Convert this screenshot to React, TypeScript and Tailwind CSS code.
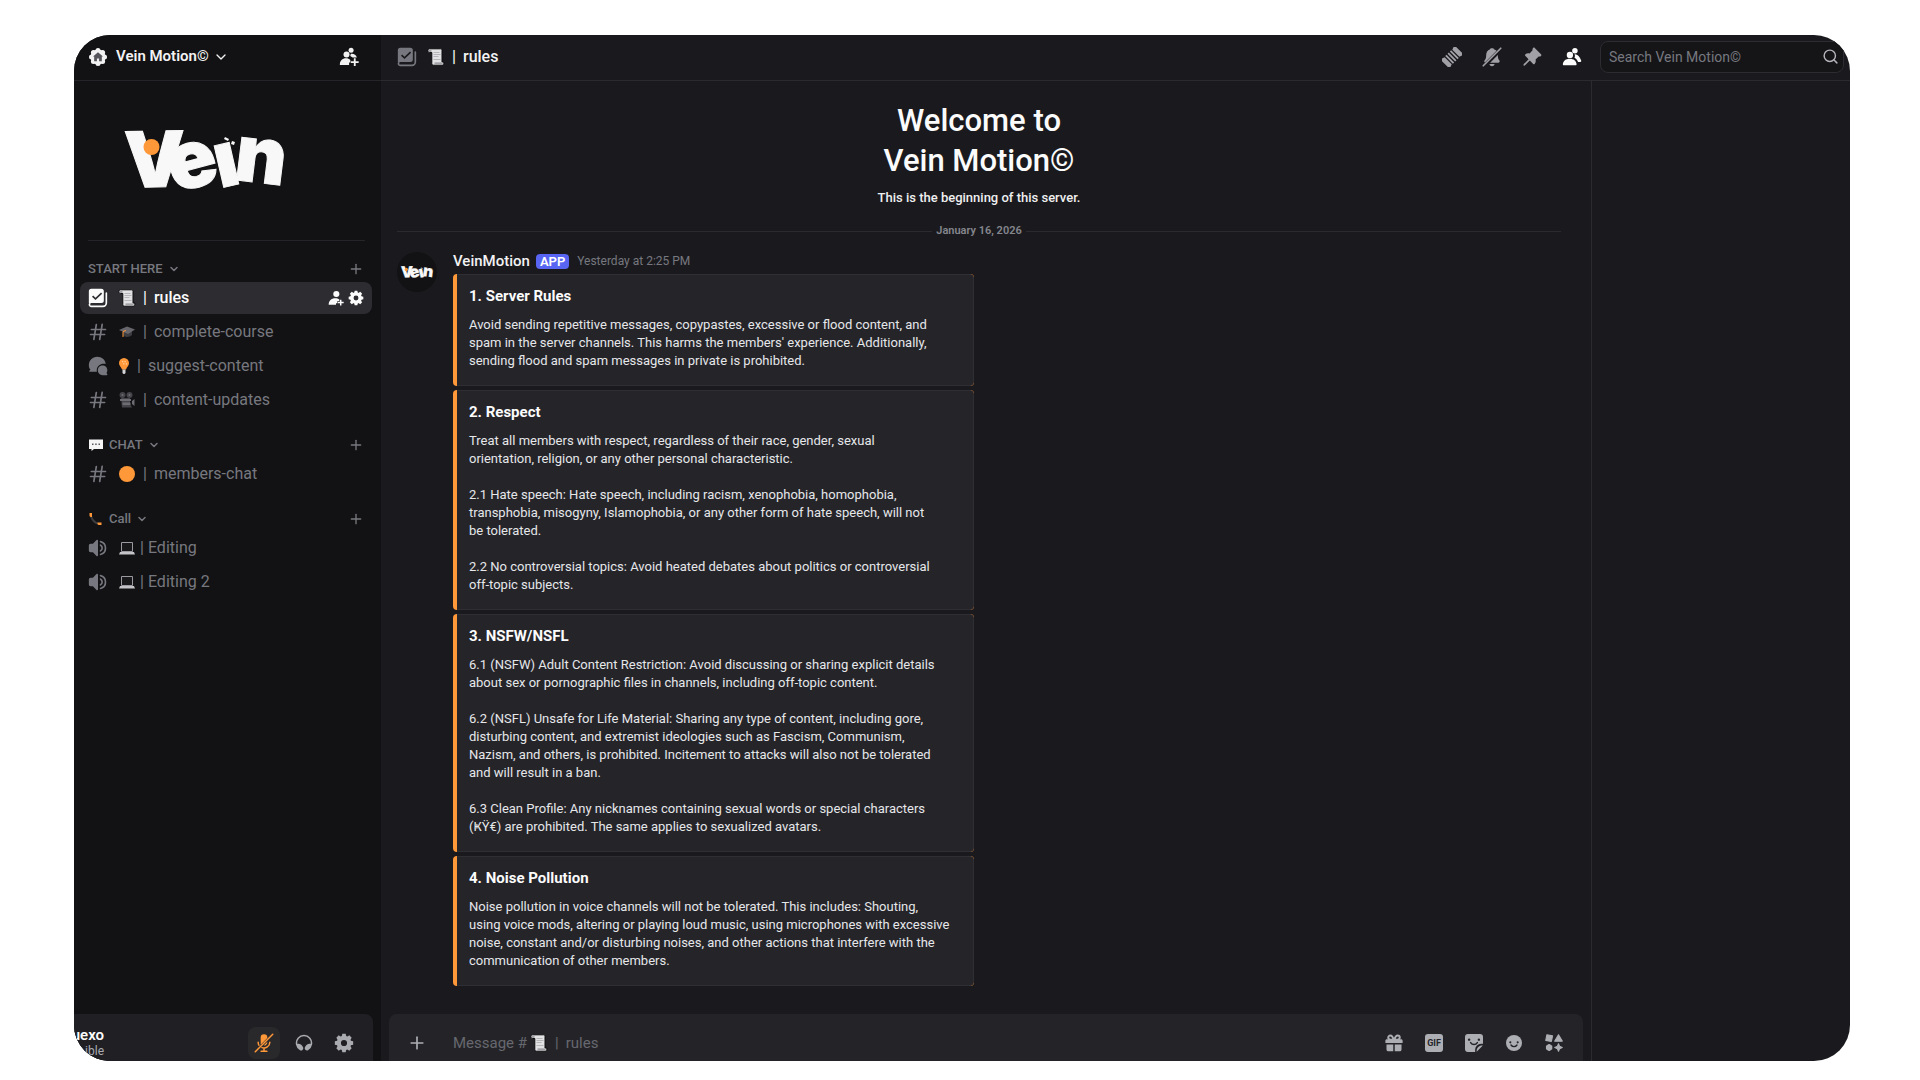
import React, { useState } from 'react';
import { ChevronDown, Plus, Search } from 'lucide-react';

interface IconProps {
  className?: string;
}

/* ---------- logo ---------- */

const VeinLogo: React.FC<IconProps> = ({ className }) => (
  <svg viewBox="0 0 170 80" className={`overflow-visible ${className}`} role="img" aria-label="Vein" fontFamily="Inter, sans-serif" fontWeight={900} fill="#f8f8f8">
    <g stroke="#f8f8f8" strokeWidth="1">
      <text x="4" y="67" fontSize="77" transform="rotate(-1 32 40)">V</text>
      <text x="48" y="67" fontSize="81" transform="rotate(-15 74 45)">e</text>
      <text x="95" y="66" fontSize="78" transform="rotate(-13 107 45)">ı</text>
      <text x="115" y="63" fontSize="79" transform="rotate(7 142 42)">n</text>
    </g>
    <circle cx="31.5" cy="27" r="8" fill="#ff9838" />
    <path d="M105 17l4 2-1 2-4-2zM112 21l3 1-1 3-3-1z" />
  </svg>
);

/* ---------- interface icons ---------- */

const ServerBadge: React.FC<IconProps> = ({ className }) => (
  <svg viewBox="0 0 24 24" className={className}>
    <g fill="#f2f2f3">
      <circle cx="12" cy="12" r="9" />
      <circle cx="12" cy="4.2" r="3" />
      <circle cx="12" cy="19.8" r="3" />
      <circle cx="4.2" cy="12" r="3" />
      <circle cx="19.8" cy="12" r="3" />
      <circle cx="6.5" cy="6.5" r="3" />
      <circle cx="17.5" cy="6.5" r="3" />
      <circle cx="6.5" cy="17.5" r="3" />
      <circle cx="17.5" cy="17.5" r="3" />
    </g>
    <path fill="#55555b" d="M12 6.2l6 5.3h-1.4v5.6h-3.3v-3.4h-2.6v3.4H7.4v-5.6H6z" />
  </svg>
);

const InvitePeople: React.FC<IconProps> = ({ className }) => (
  <svg viewBox="0 0 24 24" className={className} fill="currentColor">
    <circle cx="14.5" cy="4" r="3" />
    <circle cx="9" cy="9" r="3.6" />
    <path d="M14 8.3c3.6-.6 6.4 1 7.4 4.2h-5.2l-2.6-1.6z" />
    <path d="M1 21.5c0-5 3-8 7.4-8 2.2 0 4 .7 5.2 2v3h-1.5v3z" />
    <path d="M17.8 13.5h2.2v3.6h3.6v2.2H20v3.6h-2.2v-3.6h-3.6v-2.2h3.6z" />
  </svg>
);

const AddMember: React.FC<IconProps> = ({ className }) => (
  <svg viewBox="0 0 24 24" className={className} fill="currentColor">
    <circle cx="12.5" cy="6" r="4.6" />
    <path d="M1 22c0-6 4-9.8 9.8-9.8 2.6 0 4.6.6 6.2 2v2.3h-3V20h-2v2z" />
    <path d="M18 14.5h2.2v3.2h3.3v2.2h-3.3v3.3H18v-3.3h-3.3v-2.2H18z" />
  </svg>
);

const Gear: React.FC<IconProps> = ({ className }) => (
  <svg viewBox="0 0 24 24" className={className}>
    <circle cx="12" cy="12" r="6.2" fill="none" stroke="currentColor" strokeWidth="5" />
    <g fill="currentColor">
      {[0, 45, 90, 135, 180, 225, 270, 315].map(angle => (
        <path key={angle} d="M10 1h4l1 4.5H9z" transform={`rotate(${angle} 12 12)`} />
      ))}
    </g>
  </svg>
);

const RulesIcon: React.FC<IconProps> = ({ className }) => (
  <svg viewBox="0 0 24 24" className={className}>
    <path
      fill="currentColor"
      fillRule="evenodd"
      d="M4 1h12a3 3 0 0 1 3 3v11a3 3 0 0 1-3 3H4a3 3 0 0 0-2 .7L1 18V4a3 3 0 0 1 3-3zm11.6 4.3L9 11.6 6.2 8.9 4.8 10.4 9 14.5 17 6.8z"
    />
    <path fill="none" stroke="currentColor" strokeWidth="2" strokeLinecap="round" d="M22 6v12a4 4 0 0 1-4 4H4a2 2 0 0 1-2-3" />
  </svg>
);

const Hash: React.FC<IconProps> = ({ className }) => (
  <svg viewBox="0 0 24 24" className={className} fill="currentColor">
    <path
      fillRule="evenodd"
      d="M10.99 3.16A1 1 0 1 0 9 2.84L8.15 8H4a1 1 0 0 0 0 2h3.82l-.67 4H3a1 1 0 1 0 0 2h3.82l-.8 4.84a1 1 0 0 0 1.97.32L8.85 16h4.97l-.8 4.84a1 1 0 0 0 1.97.32l.86-5.16H20a1 1 0 1 0 0-2h-3.82l.67-4H21a1 1 0 1 0 0-2h-3.82l.8-4.84a1 1 0 1 0-1.97-.32L15.15 8h-4.97l.8-4.84ZM14.15 14l.67-4H9.85l-.67 4h4.97Z"
    />
  </svg>
);

const Forum: React.FC<IconProps> = ({ className }) => (
  <svg viewBox="0 0 24 24" className={className} fill="currentColor">
    <path d="M11 1c5.500 0 9.800 3.600 10.200 8.500-5-1.400-10.700 2-10.700 7.500 0 .8.1 1.400.3 2H2.500c-1 0-1.300-1-.6-1.600l1-1C1.700 15 1 13 1 11 1 5.400 5.400 1 11 1z" />
    <path d="M17.5 11.5c3.300 0 5.700 2.500 5.700 5.700 0 1.300-.4 2.400-1 3.300l.9 1.200c.4.600.1 1.300-.6 1.300h-5c-3.200 0-5.700-2.500-5.700-5.800s2.500-5.700 5.700-5.700z" />
  </svg>
);

const Speaker: React.FC<IconProps> = ({ className }) => (
  <svg viewBox="0 0 24 24" className={className} fill="currentColor">
    <path d="M12 3a1 1 0 0 0-1-1h-.06a1 1 0 0 0-.74.32L5.92 7H3a2 2 0 0 0-2 2v6a2 2 0 0 0 2 2h2.92l4.28 4.68a1 1 0 0 0 .74.32H11a1 1 0 0 0 1-1V3Z" />
    <path d="M15.1 20.75c-.58.14-1.1-.33-1.1-.92v-.03c0-.5.37-.92.85-1.05a7 7 0 0 0 0-13.5A1.11 1.11 0 0 1 14 4.200v-.03c0-.6.52-1.06 1.1-.92a9 9 0 0 1 0 17.5Z" />
    <path d="M15.16 16.51c-.57.28-1.16-.2-1.16-.83v-.14c0-.43.28-.8.63-1.02a3 3 0 0 0 0-5.04c-.35-.23-.63-.6-.63-1.02v-.14c0-.63.59-1.1 1.16-.83a5 5 0 0 1 0 9.02Z" />
  </svg>
);

const Threads: React.FC<IconProps> = ({ className }) => (
  <svg viewBox="0 0 24 24" className={className} fill="currentColor">
    <g transform="rotate(45 12 12)">
      <path d="M4 0h16l-2 5.500H6zM6 18.500h12l2 5.500H4z" />
      <path d="M5.500 7h13v2.200h-13zM5.500 10.900h13v2.200h-13zM5.500 14.800h13V17h-13z" />
    </g>
  </svg>
);

const BellOff: React.FC<IconProps> = ({ className }) => (
  <svg viewBox="0 0 24 24" className={className} fill="currentColor">
    <path d="M12 1.500c1.500 0 2.300.6 2.700 1.500 1.100.3 2 .8 2.800 1.500L3.500 18.500c-1-.4-1-1.700-.3-2.500 1.300-1.400 1.800-3 1.800-6 0-3.600 1.700-6.200 4.300-7C9.700 2.100 10.500 1.500 12 1.500z" />
    <path d="M19 9.500c0 3.200.5 5 1.800 6.500.9 1 .3 3-1.300 3H9.800zM9 20.500h6c0 1.500-1.300 2.700-3 2.700s-3-1.200-3-2.700z" />
    <path stroke="currentColor" strokeWidth="2" strokeLinecap="round" d="M1.500 22.500l21-21" />
  </svg>
);

const Pin: React.FC<IconProps> = ({ className }) => (
  <svg viewBox="0 0 24 24" className={className} fill="currentColor">
    <path d="M13.300 1.200c.8-.8 1.500-.5 2 0l7.500 7.500c.6.600.7 1.300 0 2-.8.8-1.800 1-2.800.7l-3.700 3.700c.5 1.900.2 3.800-1.200 5.200-.6.600-1.200.5-1.700 0l-4-4-5.700 5.700c-.6.600-1.300.6-1.700.2-.4-.4-.4-1.100.2-1.700L7.900 14.600l-4-4c-.5-.5-.6-1.100 0-1.700 1.400-1.400 3.300-1.700 5.200-1.200L12.700 4c-.3-1-.1-2 .6-2.800z" />
  </svg>
);

const Members: React.FC<IconProps> = ({ className }) => (
  <svg viewBox="0 0 24 24" className={className} fill="currentColor">
    <circle cx="15.5" cy="4.500" r="3.300" />
    <path d="M15 8.800c3.300-.6 6.300 2.500 8 7.500.3 1-.1 1.700-1.100 1.700h-2.600c-.8-2.400-2.300-4.200-4.300-5.200.7-1.200.7-2.700 0-4z" />
    <circle cx="9.5" cy="9.500" r="3.800" />
    <path d="M1 20.500C1.500 16.500 4.500 14 9.300 14s7.800 2.500 8.200 6.500c.1 1-.4 1.500-1.200 1.500H2.200c-.8 0-1.300-.5-1.200-1.500z" />
  </svg>
);

const MicMuted: React.FC<IconProps> = ({ className }) => (
  <svg viewBox="0 0 24 24" className={className} fill="none" stroke="currentColor" strokeWidth="1.800" strokeLinecap="round">
    <path fill="currentColor" stroke="none" d="M12 1.500a4 4 0 0 1 4 4v.5l-8 8V5.500a4 4 0 0 1 4-4zM16 10.500v.5a4 4 0 0 1-4.500 4z" />
    <path d="M5 11c0 1.500.3 2.600.9 3.700M19 11a7 7 0 0 1-9.500 6.500M12 18.500v3M8.500 22h7" />
    <path d="M1.500 22.500l21-21" />
  </svg>
);

const Headphones: React.FC<IconProps> = ({ className }) => (
  <svg viewBox="0 0 24 24" className={className} fill="currentColor">
    <path d="M12 3a9 9 0 0 0-8.95 10h1.87a5 5 0 0 1 4.1 2.13l1.37 1.97a3.1 3.1 0 0 1-.17 3.78 2.85 2.85 0 0 1-3.55.74 11 11 0 1 1 10.66 0c-1.27.71-2.73.23-3.55-.74a3.1 3.1 0 0 1-.17-3.78l1.38-1.97a5 5 0 0 1 4.1-2.13h1.86A9 9 0 0 0 12 3Z" />
  </svg>
);

const Gift: React.FC<IconProps> = ({ className }) => (
  <svg viewBox="0 0 24 24" className={className} fill="currentColor">
    <path fill="none" stroke="currentColor" strokeWidth="2.600" d="M11.5 7.500C10.5 4 9 2 7.200 2 5.500 2 4.300 3.200 4.300 4.700S5.500 7.500 7.200 7.500zM12.5 7.500C13.500 4 15 2 16.800 2c1.700 0 2.900 1.200 2.900 2.700s-1.200 2.800-2.900 2.800z" />
    <path d="M2.500 7h19c1.200 0 2 .8 2 2v3H.5V9c0-1.200.8-2 2-2zM2 14h9v9H4.500A2.500 2.500 0 0 1 2 20.500zM13 14h9v6.500a2.500 2.500 0 0 1-2.500 2.500H13z" />
  </svg>
);

const Gif: React.FC<IconProps> = ({ className }) => (
  <svg viewBox="0 0 24 24" className={className}>
    <rect width="24" height="24" rx="4" fill="currentColor" />
    <text x="12" y="16.5" textAnchor="middle" fontSize="12" fontWeight={700} fontFamily="Roboto, sans-serif" fill="#242429">GIF</text>
  </svg>
);

const Sticker: React.FC<IconProps> = ({ className }) => (
  <svg viewBox="0 0 24 24" className={className}>
    <path fill="currentColor" d="M4 0h16a4 4 0 0 1 4 4v9h-2.500a8 8 0 0 0-8 8v3H4a4 4 0 0 1-4-4V4a4 4 0 0 1 4-4z" />
    <path fill="currentColor" d="M23.5 15.500l-8 8c-.2-5 3-8.200 8-8z" />
    <g fill="#242429">
      <circle cx="5.5" cy="7.500" r="1.600" />
      <circle cx="18.5" cy="7.500" r="1.600" />
    </g>
    <path fill="none" stroke="#242429" strokeWidth="2" strokeLinecap="round" d="M7.500 11.500c2.300 3.500 6.700 3.500 9 0" />
  </svg>
);

const Smile: React.FC<IconProps> = ({ className }) => (
  <svg viewBox="0 0 24 24" className={className}>
    <circle cx="12" cy="12" r="12" fill="currentColor" />
    <g fill="#242429">
      <circle cx="6.5" cy="11" r="1.600" />
      <circle cx="17.5" cy="11" r="1.600" />
    </g>
    <path fill="none" stroke="#242429" strokeWidth="2" strokeLinecap="round" d="M7.500 15c2.300 3.300 6.700 3.300 9 0" />
  </svg>
);

const Apps: React.FC<IconProps> = ({ className }) => (
  <svg viewBox="0 0 24 24" className={className} fill="currentColor" stroke="currentColor" strokeWidth="1.500" strokeLinejoin="round">
    <path d="M2.500 1l7.500 1.500-1.500 7.500L1 8.500z" />
    <path d="M18 1l5 8.500H13z" />
    <path d="M5.500 14.500l3 1.800v3.400l-3 1.800-3-1.800v-3.400z" strokeWidth="2.500" />
    <path d="M18 13l1.500 3.500L23 18l-3.500 1.500L18 23l-1.500-3.500L13 18l3.500-1.500z" />
  </svg>
);

/* ---------- channel emojis ---------- */

const ScrollEmoji: React.FC<IconProps> = ({ className }) => (
  <svg viewBox="0 0 18 18" className={className}>
    <path fill="#e2e2e4" stroke="#0c0c0e" strokeWidth="1" d="M2.500.8h11c1 0 1.500.7 1.500 1.500V14h1.800v1.500c0 1-.7 1.700-1.700 1.700H6.500c-1 0-1.700-.7-1.700-1.700V4.500H2.500C1.500 4.500.9 3.700.9 2.700S1.500.8 2.500.8z" />
    <path stroke="#b4b4b9" strokeWidth="1" d="M6.500 4.500h6M6.500 6.500h7M6.500 8.500h5M6.500 11.500h7" />
    <path fill="#8c8c92" d="M2 2.200h2.500v1.500H2zM7.500 14.500h8v1.200h-8z" />
  </svg>
);

const GradCapEmoji: React.FC<IconProps> = ({ className }) => (
  <svg viewBox="0 0 18 18" className={className}>
    <path fill="#3c3c41" d="M5 8v4.500c2 2 6.500 2 9-.5V8z" />
    <path fill="#66666c" d="M1 7l8-3.500L17 6.500l-7 4.500z" />
    <path fill="none" stroke="#ff9838" d="M8 7.500L5 8.500V14" />
  </svg>
);

const BulbEmoji: React.FC<IconProps> = ({ className }) => (
  <svg viewBox="0 0 12 18" className={className}>
    <path fill="#ff9838" d="M6 1a5 5 0 0 1 5 5.200c0 2.800-2.500 4-3 6.300H4C3.500 10.200 1 9 1 6.200A5 5 0 0 1 6 1z" />
    <path fill="#ffd2a3" d="M4 4h1.200v1.200H4zM6.500 4h1.200v1.200H6.500zM5.200 6.200h1.200v1.200H5.200zM7.800 6.200H9v1.200H7.800z" />
    <path fill="#d5d5d8" d="M4.500 12.500h3V16l-1 1h-1l-1-1z" />
  </svg>
);

const CameraEmoji: React.FC<IconProps> = ({ className }) => (
  <svg viewBox="0 0 18 18" className={className}>
    <g fill="#44444a">
      <circle cx="4.5" cy="4" r="3" />
      <circle cx="11.5" cy="4" r="3" />
      <path d="M3 7h9v9.500H4zM12 13l2 3.500h-3z" />
    </g>
    <g fill="#6c6c72">
      <circle cx="4.5" cy="4" r="1" />
      <circle cx="11.5" cy="4" r="1" />
      <path d="M2 8h11v2H2zM4.500 11.500h8V14h-8zM14 10l2.500-2v7L14 13z" />
    </g>
  </svg>
);

const OrangeDotEmoji: React.FC<IconProps> = ({ className }) => (
  <svg viewBox="0 0 18 18" className={className}>
    <circle cx="9" cy="9" r="8" fill="#ff9838" />
  </svg>
);

const LaptopEmoji: React.FC<IconProps> = ({ className }) => (
  <svg viewBox="0 0 18 18" className={className}>
    <path fill="#18181b" stroke="#9a9aa0" strokeWidth="1" d="M3.500 3.500h11v9h-11z" />
    <path fill="#c4c4c8" d="M2 13h14l1 2.500H1z" />
  </svg>
);

const BubbleEmoji: React.FC<IconProps> = ({ className }) => (
  <svg viewBox="0 0 16 16" className={className}>
    <path fill="#f4f4f5" d="M1 2.500h14v9.500H6L3.500 14v-2H1z" />
    <path fill="#55555b" d="M4 6.500h1.500V8H4zM7.200 6.500h1.500V8H7.200zM10.500 6.500H12V8h-1.500z" />
  </svg>
);

const PhoneEmoji: React.FC<IconProps> = ({ className }) => (
  <svg viewBox="0 0 16 16" className={className}>
    <path fill="none" stroke="#3c3c41" strokeWidth="2" d="M3 5c1 4 4 7 8 8" />
    <path fill="#ff9838" d="M1.500 2h2.500v4H2.500l-1-1zM9.500 11.500h4V14h-3l-1-1z" />
  </svg>
);

/* ---------- data ---------- */

type Icon = React.FC<IconProps>;

interface Channel {
  name: string;
  icon: Icon;
  emoji: Icon;
  emojiClass?: string;
  active?: boolean;
  voice?: boolean;
}

const categories: { name: string; emoji?: Icon; channels: Channel[] }[] = [
  {
    name: 'START HERE',
    channels: [
      { name: 'rules', icon: RulesIcon, emoji: ScrollEmoji, active: true },
      { name: 'complete-course', icon: Hash, emoji: GradCapEmoji },
      { name: 'suggest-content', icon: Forum, emoji: BulbEmoji, emojiClass: 'w-3 h-[18px]' },
      { name: 'content-updates', icon: Hash, emoji: CameraEmoji },
    ],
  },
  {
    name: 'CHAT',
    emoji: BubbleEmoji,
    channels: [{ name: 'members-chat', icon: Hash, emoji: OrangeDotEmoji }],
  },
  {
    name: 'Call',
    emoji: PhoneEmoji,
    channels: [
      { name: 'Editing', icon: Speaker, emoji: LaptopEmoji, voice: true },
      { name: 'Editing 2', icon: Speaker, emoji: LaptopEmoji, voice: true },
    ],
  },
];

const rules = [
  {
    title: '1. Server Rules',
    body: `Avoid sending repetitive messages, copypastes, excessive or flood content, and
spam in the server channels. This harms the members' experience. Additionally,
sending flood and spam messages in private is prohibited.`,
  },
  {
    title: '2. Respect',
    body: `Treat all members with respect, regardless of their race, gender, sexual
orientation, religion, or any other personal characteristic.

2.1 Hate speech: Hate speech, including racism, xenophobia, homophobia,
transphobia, misogyny, Islamophobia, or any other form of hate speech, will not
be tolerated.

2.2 No controversial topics: Avoid heated debates about politics or controversial
off-topic subjects.`,
  },
  {
    title: '3. NSFW/NSFL',
    body: `6.1 (NSFW) Adult Content Restriction: Avoid discussing or sharing explicit details
about sex or pornographic files in channels, including off-topic content.

6.2 (NSFL) Unsafe for Life Material: Sharing any type of content, including gore,
disturbing content, and extremist ideologies such as Fascism, Communism,
Nazism, and others, is prohibited. Incitement to attacks will also not be tolerated
and will result in a ban.

6.3 Clean Profile: Any nicknames containing sexual words or special characters
(ҜŸ€) are prohibited. The same applies to sexualized avatars.`,
  },
  {
    title: '4. Noise Pollution',
    body: `Noise pollution in voice channels will not be tolerated. This includes: Shouting,
using voice mods, altering or playing loud music, using microphones with excessive
noise, constant and/or disturbing noises, and other actions that interfere with the
communication of other members.`,
  },
];

/* ---------- sections ---------- */

const ChannelRow: React.FC<{ channel: Channel }> = ({ channel }) => {
  const { name, icon: TypeIcon, emoji: Emoji, emojiClass, active, voice } = channel;
  return (
    <li className={`flex items-center h-8 px-2 rounded-lg ${active ? 'bg-[#2c2c31] text-[#fbfbfb]' : 'text-[#77787f] hover:bg-[#1d1d20]'}`}>
      <a href="#" className="flex flex-1 items-center gap-[10px]">
        <TypeIcon className="w-5 h-5" />
        <span className={`flex items-center ${voice ? 'gap-1' : 'gap-[7px]'}`}>
          <Emoji className={emojiClass || 'w-[18px] h-[18px]'} />
          <span>|</span>
          <span className={active ? 'font-medium' : 'font-normal'}>{name}</span>
        </span>
      </a>
      {active && (
        <div className="flex gap-1">
          <button type="button" aria-label="Invite to channel"><AddMember className="w-4 h-4" /></button>
          <button type="button" aria-label="Edit channel"><Gear className="w-4 h-4" /></button>
        </div>
      )}
    </li>
  );
};

const Sidebar: React.FC = () => (
  <aside className="flex flex-col w-[307px] shrink-0 bg-[#121214]">
    <header className="flex items-center h-[46px] pl-[14px] pr-[22px] pb-[2px] border-b border-[#252529]">
      <button type="button" className="flex items-center gap-1 text-[15px] font-semibold text-[#f2f2f3]">
        <ServerBadge className="w-5 h-5 mr-1" />
        Vein Motion©
        <ChevronDown className="w-4 h-4" />
      </button>
      <button type="button" aria-label="Invite people" className="ml-auto text-[#f2f2f3]">
        <InvitePeople className="w-5 h-5" />
      </button>
    </header>

    <VeinLogo className="w-[170px] h-20 mt-[39px] ml-[46px]" />
    <hr className="mt-10 ml-[14px] mr-4 border-[#252529]" />

    <nav className="flex-1 pl-[6px] pr-[9px]">
      {categories.map(({ name, emoji: Emoji, channels }) => (
        <section key={name} className="pt-4 first:pt-[15px]">
          <div className="flex items-center justify-between h-[26px] px-2 text-[#77787f]">
            <button type="button" className="flex items-center gap-[5px] text-[13px] font-medium">
              {Emoji && <Emoji className="w-4 h-4" />}
              {name}
              <ChevronDown className="w-3 h-3" strokeWidth={3} />
            </button>
            <button type="button" aria-label={`Create channel in ${name}`}>
              <Plus className="w-4 h-4" strokeWidth={2} />
            </button>
          </div>
          <ul className="flex flex-col gap-[2px]">
            {channels.map(channel => <ChannelRow key={channel.name} channel={channel} />)}
          </ul>
        </section>
      ))}
    </nav>

    {/* User panel */}
    <div className="flex items-center mr-2 pt-[13px] pb-[2px] pr-[19px] rounded-tr-lg bg-[#202024] text-[#aaaab1]">
      <div className="flex flex-col items-end w-[30px] leading-4">
        <span className="text-[15px] font-semibold text-[#fbfbfb]">uexo</span>
        <span className="text-[12px]">ible</span>
      </div>
      <div className="flex items-center gap-[14px] ml-auto">
        <button type="button" aria-label="Unmute" className="flex items-center justify-center w-8 h-8 rounded-lg bg-[#29292c] text-[#ff9838]">
          <MicMuted className="w-5 h-5" />
        </button>
        <div className="flex gap-5">
          <button type="button" aria-label="Deafen"><Headphones className="w-5 h-5 p-px" /></button>
          <button type="button" aria-label="User settings"><Gear className="w-5 h-5" /></button>
        </div>
      </div>
    </div>
  </aside>
);

const TopBar: React.FC = () => (
  <header className="flex items-center h-[46px] pl-4 pr-[6px] pb-[2px] border-b border-[#2a2a2f]">
    <RulesIcon className="w-5 h-5 text-[#77787f]" />
    <h1 className="flex items-center gap-[7px] ml-[10px] text-[#f2f2f3] font-medium">
      <ScrollEmoji className="w-[18px] h-[18px]" />
      <span>|</span>
      rules
    </h1>
    <div className="flex items-center gap-5 ml-auto mr-[18px] text-[#a0a0a6]">
      <button type="button" aria-label="Threads"><Threads className="w-5 h-5" /></button>
      <button type="button" aria-label="Notification settings"><BellOff className="w-5 h-5" /></button>
      <button type="button" aria-label="Pinned messages"><Pin className="w-5 h-5" /></button>
      <button type="button" aria-label="Member list" className="text-[#fbfbfb]"><Members className="w-5 h-5" /></button>
    </div>
    <label className="flex items-center w-[244px] h-8 px-2 rounded-lg border border-[#2c2c31] bg-[#151518]">
      <input type="search" aria-label="Search" placeholder="Search Vein Motion©" className="flex-1 min-w-0 text-sm bg-transparent outline-none text-[#dfe0e2] placeholder:text-[#77787f]" />
      <Search className="w-[17px] h-[17px] -mr-1 text-[#b5b5bb]" />
    </label>
  </header>
);

const MessageBox: React.FC = () => {
  const [message, setMessage] = useState('');

  return (
    <form className="flex items-center mx-2 pl-[18px] pr-[19px] pt-[13px] pb-[2px] rounded-t-lg bg-[#242428] text-[#adaeb4]" onSubmit={e => e.preventDefault()}>
      <button type="button" aria-label="Add attachment"><Plus className="w-5 h-5" /></button>
      <div className="relative flex-1 ml-[26px] h-8">
        <input
          type="text"
          aria-label="Message # rules"
          className="w-full h-full bg-transparent outline-none text-[15px] text-[#dfe0e2]"
          value={message}
          onChange={e => setMessage(e.target.value)}
        />
        {!message && (
          <div className="absolute inset-0 flex items-center gap-[7px] pointer-events-none text-[15px] text-[#67686f]">
            <span>Message #</span>
            <ScrollEmoji className="w-[18px] h-[18px] -ml-1" />
            <span>|</span>
            <span>rules</span>
          </div>
        )}
      </div>
      <div className="flex gap-5">
        <button type="button" aria-label="Send a gift"><Gift className="w-5 h-5 p-px" /></button>
        <button type="button" aria-label="Open GIF picker"><Gif className="w-5 h-5 p-px" /></button>
        <button type="button" aria-label="Open sticker picker"><Sticker className="w-5 h-5 p-px" /></button>
        <button type="button" aria-label="Select emoji"><Smile className="w-5 h-5 p-[2px]" /></button>
        <button type="button" aria-label="Apps"><Apps className="w-5 h-5 p-px" /></button>
      </div>
    </form>
  );
};

const Chat: React.FC = () => (
  <section className="flex flex-col flex-1 min-w-0">
    <div className="flex-1 pl-4 pr-[30px] pt-5 pb-7">
      <div className="text-center">
        <h2 className="text-[31px] leading-10 font-medium text-[#fbfbfb]">Welcome to<br />Vein Motion©</h2>
        <p className="mt-2 text-[13px] leading-[18px] font-medium text-[#efeff0]">This is the beginning of this server.</p>
      </div>

      <div className="flex items-center gap-1 mt-4">
        <hr className="flex-1 border-[#2a2a2f]" />
        <time className="text-[11px] leading-4 font-semibold text-[#85868d]">January 16, 2026</time>
        <hr className="flex-1 border-[#2a2a2f]" />
      </div>

      <article className="flex gap-4 mt-[11px]">
        <div className="flex items-center justify-center w-10 h-10 mt-[2px] shrink-0 rounded-full bg-[#121214]">
          <VeinLogo className="w-9 h-4" />
        </div>
        <div>
          <div className="flex items-center h-[22px]">
            <span className="text-[15px] font-medium text-[#f2f2f3]">VeinMotion</span>
            <span className="ml-[6px] px-1 rounded-[4px] bg-[#5865f2] text-[13px] leading-[15px] font-semibold text-white">APP</span>
            <time className="ml-2 text-[12px] text-[#77787f]">Yesterday at 2:25 PM</time>
          </div>
          <div className="flex flex-col gap-1 w-[521px] mt-[2px]">
            {rules.map(rule => (
              <div key={rule.title} className="flex rounded-[4px] overflow-hidden bg-[#ff9838] pl-1">
                <div className="flex-1 pt-[10px] pb-[15px] pl-3 rounded-r-[4px] border border-l-0 border-[#2e2e33] bg-[#242429]">
                  <h3 className="text-[15px] leading-[22px] font-bold text-[#fbfbfb]">{rule.title}</h3>
                  <p className="mt-[9px] text-[13px] leading-[18px] whitespace-pre text-[#e6e7e9]">{rule.body}</p>
                </div>
              </div>
            ))}
          </div>
        </div>
      </article>
    </div>
    <MessageBox />
  </section>
);

const App: React.FC = () => {
  return (
    <div className="flex min-h-screen pt-[35px] pb-[19px] pl-[74px] pr-[70px] bg-white font-[Roboto,'Noto_Sans',sans-serif]">
      <div className="flex flex-1 rounded-[36px] overflow-hidden bg-[#1a1a1e]">
        <Sidebar />
        <main className="flex flex-col flex-1 min-w-0">
          <TopBar />
          <div className="flex flex-1">
            <Chat />
            <aside aria-label="Members" className="w-[259px] shrink-0 border-l border-[#2a2a2f]" />
          </div>
        </main>
      </div>
    </div>
  );
};

export default App;
